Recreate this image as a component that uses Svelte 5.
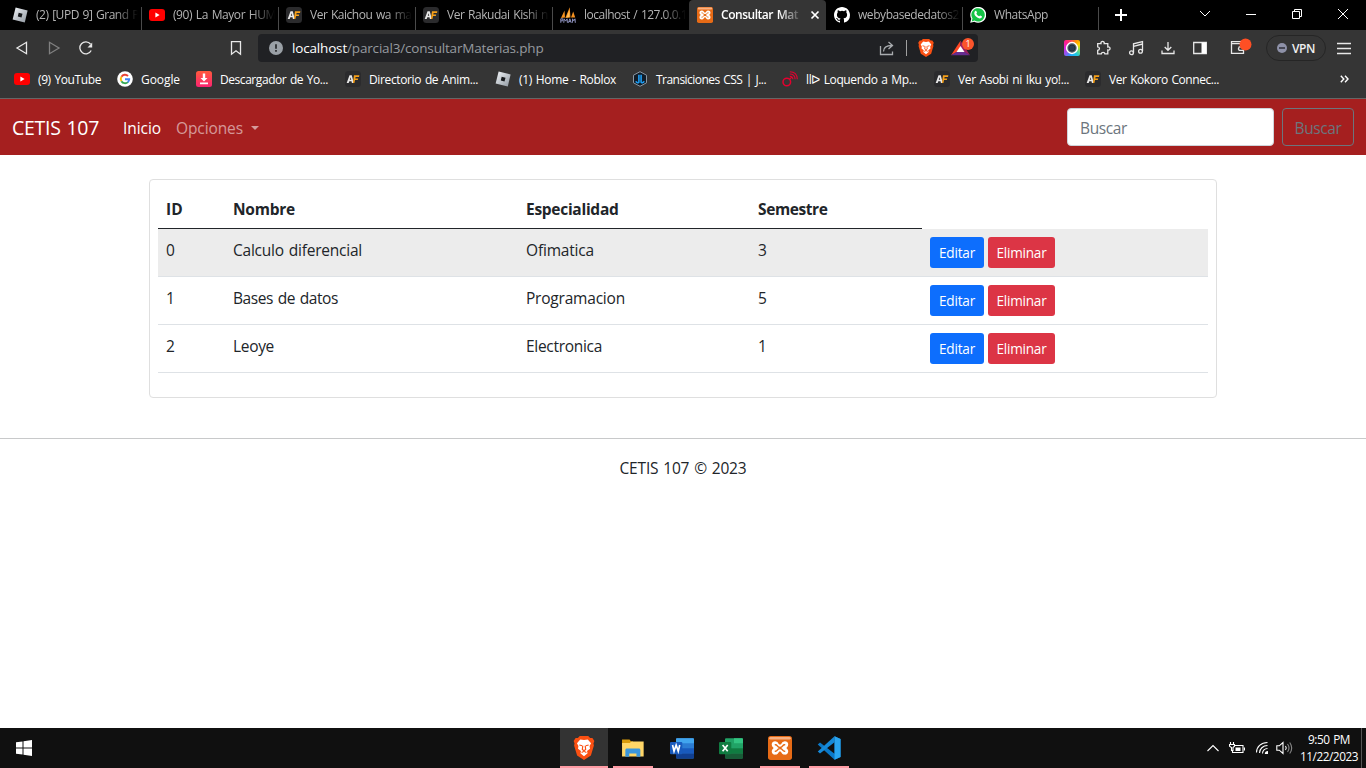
<script>
  const tabs = [
    { icon: 'roblox', text: '(2) [UPD 9] Grand P', w: 103 },
    { icon: 'youtube', text: '(90) La Mayor HUM', w: 103 },
    { icon: 'af', text: 'Ver Kaichou wa mai', w: 104 },
    { icon: 'af', text: 'Ver Rakudai Kishi n', w: 101 },
    { icon: 'pma', text: 'localhost / 127.0.0.1', w: 103 },
    { icon: 'xampp', text: 'Consultar Mat', w: 77, active: true },
    { icon: 'github', text: 'webybasededatos2', w: 101 },
    { icon: 'whatsapp', text: 'WhatsApp', w: 54 }
  ];
  const bookmarks = [
    { icon: 'youtube', text: '(9) YouTube', w: 63, slot: 103 },
    { icon: 'google', text: 'Google', w: 39, slot: 79 },
    { icon: 'download', text: 'Descargador de Yo...', w: 108, slot: 149 },
    { icon: 'af', text: 'Directorio de Anim...', w: 109, slot: 150 },
    { icon: 'roblox', text: '(1) Home - Roblox', w: 97, slot: 137 },
    { icon: 'jl', text: 'Transiciones CSS | J...', w: 110, slot: 150 },
    { icon: 'loq', text: 'llᐅ Loquendo a Mp...', w: 111, slot: 152 },
    { icon: 'af', text: 'Ver Asobi ni Iku yo!...', w: 111, slot: 151 },
    { icon: 'af', text: 'Ver Kokoro Connec...', w: 110, slot: 150 }
  ];
  const rows = [
    { id: 0, nombre: 'Calculo diferencial', wn: 129, esp: 'Ofimatica', we: 68, sem: 3 },
    { id: 1, nombre: 'Bases de datos', wn: 105, esp: 'Programacion', we: 99, sem: 5 },
    { id: 2, nombre: 'Leoye', wn: 41, esp: 'Electronica', we: 76, sem: 1 }
  ];
  const apps = [
    { icon: 'brave', state: 'current' },
    { icon: 'folder', state: 'open' },
    { icon: 'word', state: '' },
    { icon: 'excel', state: '' },
    { icon: 'xampp', state: 'open' },
    { icon: 'vscode', state: 'open' }
  ];

  function track(node, width) {
    const spaces = (node.textContent.match(/ /g) || []).length;
    node.style.wordSpacing = spaces ? '1px' : '0';
    const extra = width - node.getBoundingClientRect().width;
    node.style.letterSpacing = extra / node.textContent.length + 'px';
  }
</script>

{#snippet icon(name, size = 16)}
  <svg class="ic" width={size} height={size} viewBox="0 0 16 16">
    {#if name === 'roblox'}
      <defs><linearGradient id="rb" x1="0" y1="0" x2="1" y2="1"><stop offset="0" stop-color="#f4f7fa" /><stop offset="1" stop-color="#8e969f" /></linearGradient></defs>
      <path d="M3.6.6 15.6 3.5 12.8 15.4.6 12.4Z" fill="url(#rb)" />
      <path d="m6.7 5.8 3.8.9-1 3.7-3.7-.9Z" fill="#16181b" />
    {:else if name === 'youtube'}
      <rect x="0" y="2" width="16" height="12" rx="3" fill="#f00" />
      <path d="M6.4 5.6v4.8L10.6 8Z" fill="#fff" />
    {:else if name === 'af'}
      <rect width="16" height="16" rx="3.5" fill="#2b2b2d" />
      <path d="M1.7 12 4.500 4.200h2.300l2 7.800H6.900l-.4-1.700H4.300L3.700 12ZM4.800 8.800h1.400l-.5-2.600Z" fill="#e8e8e8" />
      <path d="M9 4.200h5.400l-.4 1.700h-3.400l-.3 1.500h2.900l-.4 1.600h-2.800L9.400 12H7.900Z" fill="#f6a019" />
    {:else if name === 'pma'}
      <path d="M1 11 4.500 3.500 5 10.500ZM5.300 11 9.700.3l.8 10.200ZM11 10.500l2.200-6 2 6Z" fill="#f59120" />
      <path d="M6.500 10.500 9.400 3v7Z" fill="#ffc25b" />
      <path d="M.8 15.800v-4h2v2H1m2.800 2 .3-4 1.500 2.300 1.500-2.300.3 4m1.100 0 1.300-4 1.400 4m-2.300-1.300h1.900M12.300 15.800l.3-4 1.200 2 1.200-2 .3 4" fill="none" stroke="#8d91bd" stroke-width="1" />
    {:else if name === 'xampp'}
      <rect width="16" height="16" rx="1.800" fill="#e76b16" />
      <rect x=".8" y=".6" width="14.400" height="1.800" rx=".9" fill="#f7b183" />
      <path d="M5.200 3.600C2.300 3.200 1.600 6.500 3.800 8 1.600 9.500 2.300 12.800 5.200 12.400 7.200 12.200 6.700 10.300 8 10.300s.8 1.900 2.800 2.100c2.900.4 3.600-2.900 1.400-4.400 2.200-1.500 1.500-4.800-1.400-4.400C8.800 3.800 9.300 5.700 8 5.700S7.200 3.800 5.200 3.600Z" fill="#fff" />
      <path d="M4.900 5.800C6.400 5.700 6 7.600 8 7.600s1.600-1.900 3.100-1.800M4.900 10.200C6.400 10.300 6 8.400 8 8.400s1.600 1.900 3.100 1.800" fill="none" stroke="#e76b16" stroke-width="1" stroke-linecap="round" />
    {:else if name === 'github'}
      <path fill="#fff" d="M8 0C3.580 0 0 3.580 0 8c0 3.540 2.290 6.530 5.470 7.590.4.070.55-.17.55-.38 0-.19-.01-.82-.01-1.490-2.010.37-2.530-.49-2.690-.94-.09-.23-.48-.94-.82-1.130-.28-.15-.68-.52-.01-.53.63-.01 1.080.58 1.230.82.72 1.210 1.870.87 2.330.66.07-.52.28-.87.51-1.070-1.780-.2-3.640-.89-3.640-3.950 0-.87.31-1.590.82-2.150-.08-.2-.36-1.020.08-2.120 0 0 .67-.21 2.200.82a7.600 7.600 0 0 1 4 0c1.530-1.040 2.200-.82 2.200-.82.44 1.100.16 1.920.08 2.120.51.56.82 1.270.82 2.150 0 3.070-1.870 3.750-3.650 3.950.29.25.54.73.54 1.480 0 1.070-.01 1.930-.01 2.200 0 .21.15.46.55.38A8 8 0 0 0 16 8c0-4.420-3.580-8-8-8Z" />
    {:else if name === 'whatsapp'}
      <path d="M.2 15.800 1.300 11.800A8 8 0 1 1 4.300 14.800Z" fill="#fff" />
      <path d="m1.700 14.400.8-2.800a6.700 6.700 0 1 1 2.100 2Z" fill="#14c346" />
      <path d="M5.200 3.900c.5-.3 1-.2 1.200.3l.6 1.400c.1.400-.5.800-.6 1.100.5 1.100 1.500 2 2.600 2.500.4 0 .8-.9 1.200-.8l1.600.8c.4.300-.1 1.500-.7 1.900-1.500.9-3.900-.3-5.400-1.900C4 7.500 3.900 5 5.200 3.900Z" fill="#fff" />
    {:else if name === 'google'}
      <circle cx="8" cy="8" r="7.800" fill="#fff" />
      <g fill="none" stroke-width="1.900">
        <path d="M4.450 5.800A4.200 4.200 0 0 1 11 5" stroke="#ea4335" />
        <path d="M4.450 5.700A4.300 4.300 0 0 0 4.450 10.300" stroke="#fbbc05" />
        <path d="M4.450 10.200A4.200 4.200 0 0 0 10.900 11.100" stroke="#34a853" />
        <path d="M8 8.200h4.200a4.200 4.200 0 0 1-1.400 3" stroke="#4285f4" />
      </g>
    {:else if name === 'download'}
      <defs><linearGradient id="dl" x1="0" y1="0" x2="0" y2="1"><stop offset="0" stop-color="#ff5a3c" /><stop offset="1" stop-color="#fa2371" /></linearGradient></defs>
      <rect width="16" height="16" rx="2.500" fill="url(#dl)" />
      <path d="M6.800 2.500h2.400V7h2.300L8 10.500 4.500 7h2.300ZM4 11.500h8v1.700H4Z" fill="#fff" />
    {:else if name === 'jl'}
      <path d="M8 .7 14.500 4.200v7.600L8 15.300 1.500 11.800V4.200Z" fill="#101c28" stroke="#8b97a3" />
      <path d="M6.900 3.800v7.300c0 1-2.500.9-3-.8M9.100 3.800v7.300c0 1 2.500.9 3-.8" fill="none" stroke="#1e9df1" stroke-width="1.600" />
    {:else if name === 'loq'}
      <g fill="none" stroke="#e4002f" stroke-width="1.500">
        <circle cx="4.800" cy="11" r="3.800" />
        <path d="m7.300 8.500 2.200-2.200M7.800 5.200c2.200 0 3 1 3.100 3.100M7.800 3c3.600 0 5.200 1.800 5.300 5.300M7.800.8c4.900 0 7.400 2.600 7.500 7.500" stroke-width="1.100" />
      </g>
    {:else if name === 'brave'}
      <path d="M5.200 0h5.600l1.300 1.400 1.500-.1 1.300 2-.6 1.700.3 1.300-2 6.700L8 16l-4.600-3L1.400 6.300 1.700 5l-.6-1.700 1.300-2 1.500.1Z" fill="#fb5012" />
      <path d="m8 2.700 2.500-.4 2.200 2.600-1 1.800.3 1.800-2 1.500.4 1.500L8 13.500l-2.400-2 .4-1.500-2-1.500.3-1.800-1-1.800 2.200-2.600Z" fill="#fff" />
      <path d="m4.900 6 1.900.5M11.100 6l-1.900.5M7.200 6.500 6.900 9l1.100.8L9.100 9l-.3-2.500M6.400 11 8 10.200l1.600.8" fill="none" stroke="#fb5012" stroke-width=".8" />
    {:else if name === 'folder'}
      <path d="M.7 2.400h5l1 1.300H8v3H.7Z" fill="#d99b0c" />
      <path d="M.7 4.700h5.200l1-1h8.200v10H.7Z" fill="#ffd667" />
      <path d="M2.900 13.900V9.400c0-.6.400-1 1-1h8c.6 0 1 .4 1 1v4.500h-2.600v-2.300H5.500v2.300Z" fill="#3b96dc" />
    {:else if name === 'word' || name === 'excel'}
      {@const w = name === 'word'}
      <rect x="4" y="1.500" width="12" height="13.500" rx=".7" fill={w ? '#2b7cd3' : '#21a366'} />
      <path d={w ? 'M4 2.200q0-.7.7-.7h10.600q.7 0 .7.700V4.800H4Z' : 'M10 1.500h5.300q.7 0 .7.700V4.800h-6Z'} fill={w ? '#41a5ee' : '#33c481'} />
      <path d="M4 8.200h12v3.500H4Z" fill={w ? '#185abd' : '#107c41'} />
      <path d="M4 11.600h12v2.700q0 .7-.7.700H4.700q-.7 0-.7-.7Z" fill={w ? '#103f91' : '#185c37'} />
      <rect x="0" y="4" width="8.200" height="8.200" rx=".7" fill={w ? '#185abd' : '#107c41'} />
      <path d={w ? 'm1.700 6 1 4.200L4.100 6l1.400 4.200 1-4.200' : 'm2.400 6 3.400 4.200M5.800 6l-3.400 4.200'} fill="none" stroke="#fff" stroke-width="1.100" />
    {:else if name === 'vscode'}
      <path d="m11.700.1 4 1.900v12l-4 1.900L.5 5.600 2 4.300l9.700 7.500Z" fill="#0a78c8" />
      <path d="M.5 10.400 11.700.1v4.100L2 11.700Z" fill="#1689d8" />
      <path d="m11.700.1 4 1.900v12l-4 1.900Z" fill="#2aa5f0" />
    {/if}
  </svg>
{/snippet}

<div class="screen">
  <div class="tabs">
    {#each tabs as t}
      <div class="tab" class:active={t.active}>
        {@render icon(t.icon)}
        <div class="label"><span use:track={t.w}>{t.text}</span></div>
        {#if t.active}
          <svg class="close" width="10" height="10" viewBox="0 0 10 10"><path d="m1.500 1.500 7 7m0-7-7 7" stroke="#fff" stroke-width="1.700" /></svg>
        {/if}
      </div>
    {/each}
    <div class="newtab"><svg width="12" height="12" viewBox="0 0 12 12"><path d="M6 0v12M0 6h12" stroke="#fff" stroke-width="2" /></svg></div>
    <div class="winbtns">
      <svg width="12" height="12" viewBox="0 0 12 12"><path d="m1 3 5 5 5-5" /></svg>
      <svg width="12" height="12" viewBox="0 0 12 12"><path d="M1 6.500h10" /></svg>
      <svg width="12" height="12" viewBox="0 0 12 12"><path d="M1.500 3.500h7v7h-7zM3.500 3V1.500h7v7H9" /></svg>
      <svg width="12" height="12" viewBox="0 0 12 12"><path d="m1 1 10 10M11 1 1 11" /></svg>
    </div>
  </div>

  <div class="toolbar">
    <div class="tb"><svg width="16" height="16" viewBox="0 0 16 16"><path d="M12.500 2.300v11.400L3 8Z" /></svg></div>
    <div class="tb dim"><svg width="16" height="16" viewBox="0 0 16 16"><path d="M3.500 2.300v11.400L13 8Z" /></svg></div>
    <div class="tb"><svg width="16" height="16" viewBox="0 0 16 16"><path d="M13.200 10.500A6 6 0 1 1 12.500 4" /><path d="M14.200 2.500v5H9.500Z" fill="#e8e8e8" stroke="none" /></svg></div>
    <div class="tb mark"><svg width="16" height="16" viewBox="0 0 16 16"><path d="M3.500 1.700h9v12.500L8 10.800l-4.500 3.400Z" /></svg></div>
    <div class="url">
      <svg width="14" height="14" viewBox="0 0 14 14"><circle cx="7" cy="7" r="7" fill="#9aa0a6" /><path d="M7 3.300v4.500M7 9v1.700" stroke="#202124" stroke-width="1.600" /></svg>
      <div class="addr"><span use:track={251.500}><b>localhost</b>/parcial3/consultarMaterias.php</span></div>
      <svg class="share" width="16" height="16" viewBox="0 0 16 16"><path d="M1.500 6v8.500h12V11.500M4.500 11.500c0-3.500 2.500-6 8.500-6M9.500 2l4 3.500-4 3.500" /></svg>
      <i></i>
      {@render icon('brave', 18)}
      <div class="bat">
        <svg width="20" height="16" viewBox="0 0 20 16"><path d="M9.500.7 0 15.300 9.500 10Z" fill="#ff4724" /><path d="M9.500.7 19 15.300 9.500 10Z" fill="#9e1f63" /><path d="M0 15.300h19L9.500 9.500Z" fill="#662d91" /><path d="m9.500 6 4 6h-8Z" fill="#fff" /></svg>
        <em>1</em>
      </div>
    </div>
    <div class="tb ext">
      <div class="ring"><svg width="16" height="16" viewBox="0 0 16 16"><circle cx="8" cy="8" r="5.400" fill="#4d5964" stroke="#fff" stroke-width="1.500" /><circle cx="8" cy="8" r="3" fill="#2c3e50" stroke="#20303e" stroke-width="1" /></svg></div>
    </div>
    <div class="tb"><svg width="16" height="16" viewBox="0 0 16 16"><path d="M1.700 3.700H5c-.8-3 4-3 3.200 0h3.600V7c3-.8 3 3.800 0 3v3.900H8.900c-.2-2-3.400-2-3.600 0H1.700v-3.500c2.400-.2 2.400-3.400 0-3.600Z" /></svg></div>
    <div class="tb"><svg width="16" height="16" viewBox="0 0 16 16"><path d="M5.500 12.800v-9l9-2.300V11M5.500 6.300l9-2.300" /><circle cx="3.500" cy="12.800" r="1.900" /><circle cx="12.500" cy="11.300" r="1.900" /></svg></div>
    <div class="tb"><svg width="16" height="16" viewBox="0 0 16 16"><path d="M8 2v8M4.700 7 8 10.300 11.300 7M2 10.500V13.500h12v-3" /></svg></div>
    <div class="tb"><svg width="16" height="16" viewBox="0 0 16 16"><path d="M1.700 2.500h12.600v11H1.700Z" /><path d="M9.500 2.500h4.800v11H9.500Z" fill="#fff" stroke="none" /></svg></div>
    <div class="tb wallet">
      <svg width="22" height="18" viewBox="0 0 22 18"><path d="M13.500 7V5.700h-12v9.600h12V12.500M1.500 5.700V3.700h9.500M13.500 8.800H9.200q-1.400 1.800 0 3.600h4.300Z" /><circle cx="15.500" cy="6.500" r="6" fill="#ff4f24" stroke="none" /></svg>
    </div>
    <div class="vpn"><svg width="10" height="10" viewBox="0 0 10 10"><circle cx="5" cy="5" r="5" fill="#8e91a8" /><path d="M2 5h6" stroke="#2e2f38" stroke-width="1.500" /></svg><span use:track={23}>VPN</span></div>
    <div class="tb"><svg width="16" height="16" viewBox="0 0 16 16"><path d="M1 3.500h14M1 8.500h14M1 13.500h14" /></svg></div>
  </div>

  <div class="bookmarks">
    {#each bookmarks as b}
      <div class="bm" style="width:{b.slot}px">{@render icon(b.icon)}<span use:track={b.w}>{b.text}</span></div>
    {/each}
    <svg class="more" width="9" height="8" viewBox="0 0 9 8"><path d="m.8.8 3 3.200-3 3.200M5 .8 8 4 5 7.200" fill="none" stroke="#fff" stroke-width="1.400" /></svg>
  </div>

  <nav>
    <a class="brand" href="#top"><span use:track={87}>CETIS 107</span></a>
    <a class="on" href="#inicio"><span use:track={38}>Inicio</span></a>
    <a href="#opciones"><span use:track={67}>Opciones</span><u></u></a>
    <div class="search"><span use:track={47}>Buscar</span></div>
    <button class="find"><span use:track={47}>Buscar</span></button>
  </nav>

  <main>
    <div class="card">
      <table>
        <colgroup><col class="c1" /><col class="c2" /><col class="c3" /><col class="c4" /><col /></colgroup>
        <thead>
          <tr><th>ID</th><th><span use:track={62}>Nombre</span></th><th><span use:track={92.500}>Especialidad</span></th><th><span use:track={69.500}>Semestre</span></th><td></td></tr>
        </thead>
        <tbody>
          {#each rows as r, i}
            <tr class:hover={i === 0}>
              <td>{r.id}</td>
              <td><span use:track={r.wn}>{r.nombre}</span></td>
              <td><span use:track={r.we}>{r.esp}</span></td>
              <td>{r.sem}</td>
              <td class="cell"><div class="acts"><button class="edit"><span use:track={36}>Editar</span></button><button class="del"><span use:track={50}>Eliminar</span></button></div></td>
            </tr>
          {/each}
        </tbody>
      </table>
    </div>
    <footer><span use:track={127}>CETIS 107 © 2023</span></footer>
  </main>

  <div class="taskbar">
    <div class="start"><svg width="16" height="16" viewBox="0 0 16 16"><path d="m0 2.300 6.500-.9v6.100H0ZM7.500 1.200 16 0v7.500H7.500ZM0 8.500h6.500v6.100L0 13.700ZM7.500 8.500H16V16l-8.500-1.200Z" fill="#fff" /></svg></div>
    <div class="apps">
      {#each apps as a}
        <div class="app {a.state}">{@render icon(a.icon, 24)}</div>
      {/each}
    </div>
    <div class="tray">
      <svg width="14" height="10" viewBox="0 0 14 10"><path d="m1.500 8 5.500-5.500L12.500 8" /></svg>
      <svg class="batt" width="16" height="14" viewBox="0 0 16 14"><path d="M5.500 4.500H14v7H3.500V9M15.500 6.500v3M1.500 1v3M4.500 1v3M.5 3.500h5v1.700L4 6.500v3H2.500v-3L.5 5.200Z" /><path d="M6.500 6.500h5V10h-5Z" fill="#fff" stroke="none" /></svg>
      <svg class="wifi" width="14" height="14" viewBox="0 0 14 14"><path d="M1.500 11.500C1.500 6 6 1.500 12.500 1.500M4.500 12C4.500 8 8 4.500 12.500 4.500M7.500 12.500c0-2.800 2.200-5 5-5" /><path d="M13 10v3h-3.200q0-3 3.200-3" fill="#fff" stroke="none" /></svg>
      <svg class="snd" width="17" height="14" viewBox="0 0 17 14"><path d="M.8 4.800h2.500L7 1.500v11L3.300 9.200H.8ZM9.500 5q1.500 2 0 4" /><path d="M11.500 3q3 4 0 8M13.700 1.500q4 5.500 0 11" stroke="#888" /></svg>
      <div class="clock"><span use:track={42}>9:50 PM</span><span use:track={58}>11/22/2023</span></div>
      <i></i>
    </div>
  </div>
</div>

<style>
  :global(body) { margin: 0; background: #fff; }
  * { box-sizing: border-box; }
  span { white-space: pre; display: inline-block; }
  svg { display: block; flex: none; }
  .screen { width: 1366px; height: 768px; display: flex; flex-direction: column; overflow: hidden; background: #fff; font-family: "Open Sans", "Noto Sans", sans-serif; }
  .tabs { height: 30px; background: #000; display: flex; padding-left: 4px; color: #b4b4b4; font-size: 12px; flex: none; }
  .tab { width: 137px; height: 30px; display: flex; align-items: center; padding: 0 0 0 8px; flex: none; }
  .tab:nth-child(n + 2), .newtab { background: linear-gradient(#4a4a4a, #4a4a4a) no-repeat left 7px / 1px 23px; }
  .tab:nth-child(7) { background: none; width: 136px; }
  .tab:nth-child(8) { width: 136px; }
  .tab.active { background: #353535; border-radius: 4px 4px 0 0; color: #fff; font-weight: 600; }
  .label { margin-left: 8px; width: 105px; line-height: 20px; -webkit-mask-image: linear-gradient(90deg, #000 78px, transparent 102px); mask-image: linear-gradient(90deg, #000 78px, transparent 102px); }
  .active .label { width: 80px; -webkit-mask-image: linear-gradient(90deg, #000 58px, transparent 82px); mask-image: linear-gradient(90deg, #000 58px, transparent 82px); }
  .close { margin-left: 9px; }
  .newtab { width: 46px; display: flex; align-items: center; justify-content: center; }
  .winbtns { margin-left: auto; margin-right: 17px; display: flex; align-items: center; gap: 34px; padding-bottom: 2px; }
  .winbtns svg { fill: none; stroke: #fff; stroke-width: 1; }
  .toolbar { height: 36px; background: #353535; display: flex; align-items: center; padding-left: 6px; flex: none; }
  .tb { width: 32px; height: 32px; display: flex; align-items: center; justify-content: center; }
  .tb svg, .share { fill: none; stroke: #e8e8e8; stroke-width: 1.300; }
  .dim svg { stroke: #808080; }
  .mark { margin-left: 118px; }
  .url { margin-left: 6px; width: 720px; height: 28px; border-radius: 4px; background: #202124; display: flex; align-items: center; padding: 0 4px 0 11px; color: #969a9f; font-size: 13.500px; }
  .addr { margin-left: 9px; flex: 1; line-height: 20px; }
  .addr b { font-weight: 400; color: #fff; }
  .share { stroke: #a9acaf; }
  .url i { width: 1px; height: 16px; background: #a0a0a0; margin: 0 10px 0 11px; }
  .bat { position: relative; margin-left: 16px; width: 23px; height: 18px; padding-top: 1px; }
  .bat em { position: absolute; left: 11px; top: -1px; width: 12px; height: 12px; border-radius: 6px; background: #fb542b; color: #fff; font: 9px/12px "Open Sans", sans-serif; text-align: center; }
  .ext { margin-left: 78px; }
  .ring { width: 16px; height: 16px; border-radius: 2px; background: conic-gradient(from 0deg, #ff5a4a, #ff9a00 35deg, #ffd800 65deg, #8be04e 100deg, #1fc8e0 145deg, #18a8ff 190deg, #8a5cf0 225deg, #e020e0 270deg, #ff1f8a 315deg, #ff5a4a); }
  .wallet { width: 48px; padding: 0 0 3px 2px; }
  .vpn { margin-left: 2px; width: 60px; height: 26px; border: 1px solid #252525; border-radius: 13px; display: flex; align-items: center; padding-left: 10px; gap: 5px; color: #f0f0f0; font-size: 12px; font-weight: 600; margin-right: 2px; }
  .bookmarks { height: 33px; padding: 0 17px 6px 14px; background: #353535; border-bottom: 1px solid #666; display: flex; align-items: center; color: #fff; font-size: 12px; flex: none; }
  .bm { display: flex; align-items: center; gap: 8px; flex: none; height: 28px; }
  .more { margin-left: auto; }
  nav { height: 56px; flex: none; background: #a51f1f; display: flex; align-items: center; padding: 0 12px; font-size: 15.500px; line-height: 24px; }
  nav a { color: rgba(255, 255, 255, .55); text-decoration: none; margin-right: 16px; display: flex; align-items: center; padding-top: 1px; }
  nav .brand { font-size: 19.500px; color: #fff; margin-right: 24px; }
  nav .on { color: #fff; margin-right: 15px; }
  nav u { margin-left: 8px; border: 4px solid transparent; border-top-color: currentColor; border-bottom: 0; }
  .search { margin-left: auto; width: 207px; height: 38px; background: #fff; border: 1px solid #ced4da; border-radius: 4px; padding: 7px 12px 5px; color: #6c757d; }
  .find { margin-left: 8px; width: 72px; height: 38px; background: none; border: 1px solid #6c757d; border-radius: 4px; color: #6c757d; font: 15.500px/24px "Open Sans", sans-serif; padding: 1px 0 0; }
  main { flex: 1; padding-top: 24px; color: #212529; font-size: 15.500px; line-height: 24px; }
  .card { width: 1068px; height: 219px; margin: 0 auto; border: 1px solid #dfdfdf; border-radius: 4px; padding: 8px; }
  table { width: 1050px; border-collapse: separate; border-spacing: 0; table-layout: fixed; }
  .c1 { width: 67px; } .c2 { width: 293px; } .c3 { width: 232px; } .c4 { width: 172px; }
  th { height: 41px; text-align: left; padding: 9px 8px 7px; border-bottom: 1px solid #212529; font-weight: 700; }
  td { padding: 9px 8px 7px; vertical-align: top; }
  tbody td { height: 48px; border-bottom: 1px solid #dee2e6; }
  tbody .cell { padding: 8px; }
  .hover { background: #ececec; }
  .acts { display: flex; gap: 4px; }
  .acts button { height: 31px; border: 0; border-radius: 3px; color: #fff; font: 13.600px/21px "Open Sans", sans-serif; padding: 0 0 1px; text-align: center; }
  .edit { width: 54px; background: #0d6efd; }
  .del { width: 67px; background: #dc3545; }
  footer { margin-top: 40px; border-top: 1px solid #c8c9ca; padding-top: 17px; text-align: center; }
  .taskbar { height: 40px; flex: none; background: #101010; display: grid; grid-template-columns: 560px 1fr auto; }
  .start { padding: 12px 16px; }
  .apps { display: flex; gap: 1px; }
  .app { width: 48px; height: 40px; display: flex; align-items: center; justify-content: center; background: linear-gradient(#ff9ba4, #ff9ba4) no-repeat center bottom / 0 2px; }
  .open { background-size: 40px 2px; }
  .current { background-color: #333; background-size: 48px 2px; }
  .tray { display: flex; align-items: center; color: #fff; }
  .tray svg { fill: none; stroke: #fff; stroke-width: 1.100; }
  .batt { margin-left: 9px; }
  .wifi { margin-left: 10px; margin-right: 7px; }
  .clock { width: 60px; margin-left: 6px; display: flex; flex-direction: column; align-items: center; font-size: 11.800px; line-height: 17px; padding-bottom: 1px; }
  .tray i { width: 1px; height: 40px; background: #555; margin: 0 4px 0 2px; }
</style>
